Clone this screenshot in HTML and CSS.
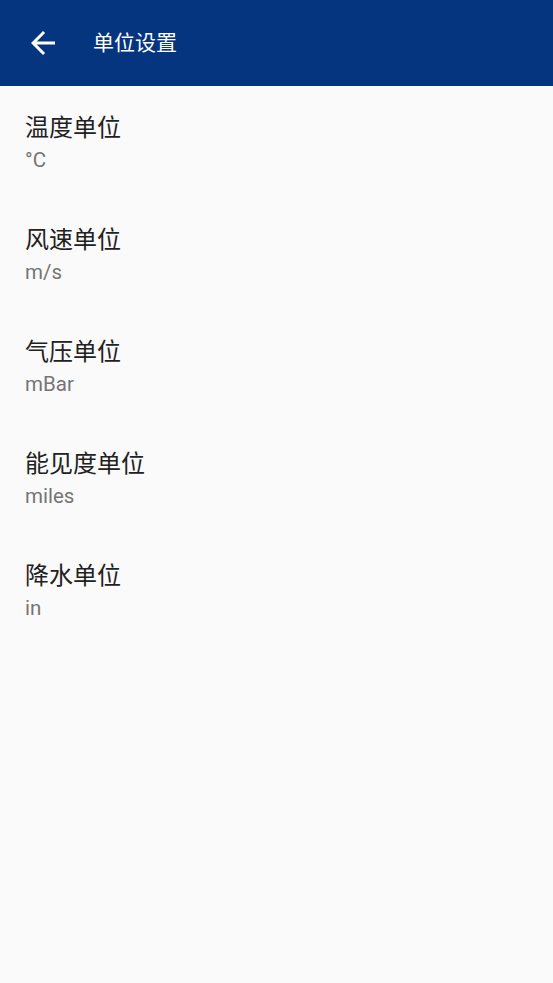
FILE: index.html
```html
<!DOCTYPE html>
<html lang="zh-CN">
<head>
<meta charset="utf-8">
<title>单位设置</title>
<link rel="stylesheet" href="styles.css">
</head>
<body>
<header class="toolbar">
  <button class="nav-btn" aria-label="返回">
    <svg class="nav-icon" viewBox="0 0 24 24" width="36" height="36"><path fill="#ffffff" d="M20 11H7.83l5.59-5.59L12 4l-8 8 8 8 1.41-1.41L7.83 13H20v-2z"/></svg>
  </button>
  <h1 class="toolbar-title">单位设置</h1>
</header>
<main class="list">
  <div class="pref">
    <div class="pref-title">温度单位</div>
    <div class="pref-summary">°C</div>
  </div>
  <div class="pref">
    <div class="pref-title">风速单位</div>
    <div class="pref-summary">m/s</div>
  </div>
  <div class="pref">
    <div class="pref-title">气压单位</div>
    <div class="pref-summary">mBar</div>
  </div>
  <div class="pref">
    <div class="pref-title">能见度单位</div>
    <div class="pref-summary">miles</div>
  </div>
  <div class="pref">
    <div class="pref-title">降水单位</div>
    <div class="pref-summary">in</div>
  </div>
</main>
</body>
</html>
```
FILE: styles.css
```css
html, body {
  margin: 0;
  padding: 0;
}
body {
  background: #fafafa;
  font-family: Roboto, "Noto Sans CJK SC", sans-serif;
  width: 553px;
  min-height: 983px;
}
.toolbar {
  height: 86px;
  background: #05357f;
  display: flex;
  align-items: center;
}
.nav-btn {
  width: 36px;
  height: 36px;
  margin-left: 25px;
  padding: 0;
  border: 0;
  background: none;
  display: flex;
  align-items: center;
  justify-content: center;
}
.nav-icon {
  display: block;
}
.toolbar-title {
  margin: 0 0 0 32px;
  font-size: 21px;
  font-weight: 400;
  color: #ffffff;
  line-height: 30px;
}
.list {
  display: flex;
  flex-direction: column;
}
.pref {
  height: 112px;
  box-sizing: border-box;
  padding: 25px 25px 0;
}
.pref-title {
  font-size: 24px;
  line-height: 35px;
  color: #212121;
}
.pref-summary {
  font-size: 20.5px;
  line-height: 28px;
  color: #757575;
}
```
